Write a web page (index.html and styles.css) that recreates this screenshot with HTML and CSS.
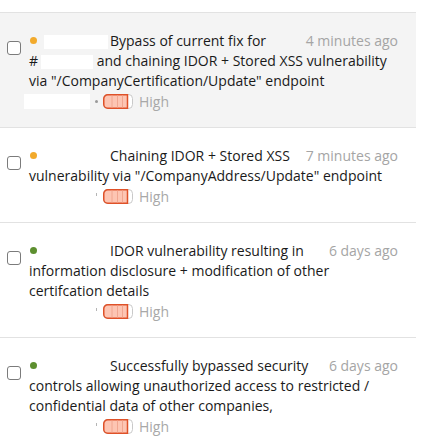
FILE: index.html
```html
<!DOCTYPE html>
<html>
<head>
<meta charset="utf-8">
<link rel="stylesheet" href="styles.css">
</head>
<body>
<div class="list">
  <div class="item item--active">
    <span class="check"></span>
    <div class="body">
      <p class="title"><span class="time">4 minutes ago</span><span class="dot dot--medium"></span><span class="redact redact--lead"></span>Bypass of current fix for <span class="nowrap">#<span class="redact redact--ref"></span></span> and chaining IDOR + Stored XSS vulnerability via "/CompanyCertification/Update" endpoint</p>
      <div class="meta"><span class="redact redact--meta"></span><span class="sep sep--dot"></span><svg class="sev" width="30" height="15" viewBox="0 0 30 15"><rect x="0.5" y="0.5" width="29" height="14" rx="4" fill="#fff" stroke="#c9c9c9"/><path d="M4.75 0.75 H24.5 V14.25 H4.75 A4 4 0 0 1 0.75 10.25 V4.75 A4 4 0 0 1 4.75 0.75 Z" fill="#fdc5b3" stroke="#df5128" stroke-width="1.5"/><path d="M9 1.5 V13.5 M14.5 1.5 V13.5 M19.5 1.5 V13.5" stroke="#f1a690" stroke-width="1"/></svg><span class="level">High</span></div>
    </div>
  </div>
  <div class="item">
    <span class="check"></span>
    <div class="body">
      <p class="title"><span class="time">7 minutes ago</span><span class="dot dot--medium"></span><span class="redact redact--lead"></span>Chaining IDOR + Stored XSS vulnerability via "/CompanyAddress/Update" endpoint</p>
      <div class="meta"><span class="redact redact--meta"></span><span class="sep sep--tick"></span><svg class="sev" width="30" height="15" viewBox="0 0 30 15"><rect x="0.5" y="0.5" width="29" height="14" rx="4" fill="#fff" stroke="#c9c9c9"/><path d="M4.75 0.75 H24.5 V14.25 H4.75 A4 4 0 0 1 0.75 10.25 V4.75 A4 4 0 0 1 4.75 0.75 Z" fill="#fdc5b3" stroke="#df5128" stroke-width="1.5"/><path d="M9 1.5 V13.5 M14.5 1.5 V13.5 M19.5 1.5 V13.5" stroke="#f1a690" stroke-width="1"/></svg><span class="level">High</span></div>
    </div>
  </div>
  <div class="item">
    <span class="check"></span>
    <div class="body">
      <p class="title"><span class="time">6 days ago</span><span class="dot dot--low"></span><span class="redact redact--lead"></span>IDOR vulnerability resulting in information disclosure + modification of other certifcation details</p>
      <div class="meta"><span class="redact redact--meta"></span><span class="sep sep--tick"></span><svg class="sev" width="30" height="15" viewBox="0 0 30 15"><rect x="0.5" y="0.5" width="29" height="14" rx="4" fill="#fff" stroke="#c9c9c9"/><path d="M4.75 0.75 H24.5 V14.25 H4.75 A4 4 0 0 1 0.75 10.25 V4.75 A4 4 0 0 1 4.75 0.75 Z" fill="#fdc5b3" stroke="#df5128" stroke-width="1.5"/><path d="M9 1.5 V13.5 M14.5 1.5 V13.5 M19.5 1.5 V13.5" stroke="#f1a690" stroke-width="1"/></svg><span class="level">High</span></div>
    </div>
  </div>
  <div class="item">
    <span class="check"></span>
    <div class="body">
      <p class="title"><span class="time">6 days ago</span><span class="dot dot--low"></span><span class="redact redact--lead"></span>Successfully bypassed security controls allowing unauthorized access to restricted / confidential data of other companies,</p>
      <div class="meta"><span class="redact redact--meta"></span><span class="sep sep--tick"></span><svg class="sev" width="30" height="15" viewBox="0 0 30 15"><rect x="0.5" y="0.5" width="29" height="14" rx="4" fill="#fff" stroke="#c9c9c9"/><path d="M4.75 0.75 H24.5 V14.25 H4.75 A4 4 0 0 1 0.75 10.25 V4.75 A4 4 0 0 1 4.75 0.75 Z" fill="#fdc5b3" stroke="#df5128" stroke-width="1.5"/><path d="M9 1.5 V13.5 M14.5 1.5 V13.5 M19.5 1.5 V13.5" stroke="#f1a690" stroke-width="1"/></svg><span class="level">High</span></div>
    </div>
  </div>
</div>
</body>
</html>
```
FILE: styles.css
```css
html, body {
  margin: 0;
  padding: 0;
  background: #fff;
}

body {
  font-family: "Open Sans", "Noto Sans", sans-serif;
  font-size: 14px;
  color: #1a1a1a;
}

.list {
  width: 416px;
  padding-top: 12px;
}

.item {
  display: flex;
  align-items: flex-start;
  border-top: 1px solid #e2e2e2;
  padding: 18px 18px 16px 7px;
  background: #fff;
}

.item--active {
  background: #f4f4f4;
}

.check {
  flex: none;
  width: 12px;
  height: 12px;
  margin-top: 10px;
  border: 1.5px solid #7b7b7b;
  border-radius: 3px;
  background: #fff;
}

.body {
  flex: 1;
  margin-left: 8px;
  min-width: 0;
}

.title {
  margin: 0;
  line-height: 20px;
}

.time {
  float: right;
  margin-left: 12px;
  color: #a5a5a5;
}

.dot {
  display: inline-block;
  width: 7px;
  height: 7px;
  border-radius: 50%;
  margin-left: 1px;
  margin-right: 7px;
  vertical-align: 2px;
}

.dot--medium {
  background: #f2aa2c;
}

.dot--low {
  background: #5d8f2f;
}

.redact {
  display: inline-block;
  background: #fff;
}

.redact--lead {
  width: 64px;
  height: 14px;
  margin-right: 2px;
  vertical-align: -3px;
}

.redact--ref {
  width: 52px;
  height: 14px;
  margin-left: 3px;
  vertical-align: -3px;
}

.nowrap {
  white-space: nowrap;
}

.meta {
  display: flex;
  align-items: center;
  height: 20px;
  color: #a8a8a8;
}

.redact--meta {
  width: 66px;
  height: 15px;
  margin-left: -5px;
}

.sep {
  display: inline-block;
  background: #9a9a9a;
}

.sep--dot {
  width: 3px;
  height: 3px;
  border-radius: 50%;
  margin-left: 5px;
  margin-right: 5px;
}

.sep--tick {
  width: 1px;
  height: 3px;
  margin-left: 6px;
  margin-right: 6px;
  margin-top: -4px;
  background: #b5b5b5;
}

.sev {
  display: block;
  flex: none;
}

.level {
  margin-left: 6px;
}
```
